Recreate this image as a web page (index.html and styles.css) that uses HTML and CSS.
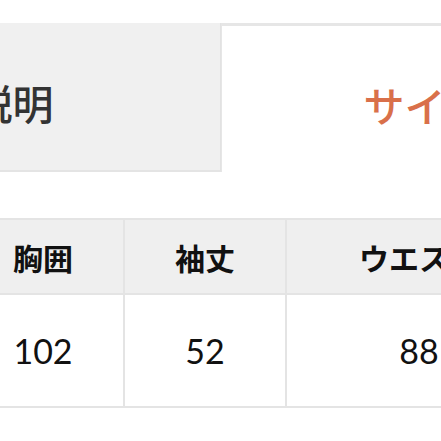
FILE: index.html
```html
<!DOCTYPE html>
<html lang="ja">
<head>
<meta charset="utf-8">
<link rel="stylesheet" href="styles.css">
</head>
<body>
<div class="page">
  <div class="tabs">
    <div class="tab tab-off">商品説明</div>
    <div class="tab tab-on">サイズ詳細</div>
  </div>
  <table class="size-table">
    <colgroup>
      <col class="c1"><col class="c2"><col class="c3">
    </colgroup>
    <thead>
      <tr><th>胸囲</th><th>袖丈</th><th>ウエスト</th></tr>
    </thead>
    <tbody>
      <tr><td>102</td><td>52</td><td>88</td></tr>
    </tbody>
  </table>
</div>
</body>
</html>
```
FILE: styles.css
```css
html, body {
  margin: 0;
  padding: 0;
  background: #fff;
}
.page {
  width: 441px;
  height: 441px;
  overflow: hidden;
  font-family: "Lato", "Noto Sans CJK JP", sans-serif;
}
.tabs {
  display: flex;
  margin-top: 23px;
  margin-left: -277px;
  width: 1000px;
  height: 149px;
}
.tab {
  width: 498px;
  box-sizing: border-box;
  display: flex;
  align-items: center;
  justify-content: center;
  font-family: "Noto Sans CJK JP", sans-serif;
  font-size: 41px;
  font-weight: 500;
  padding-top: 10px;
  white-space: nowrap;
}
.tab-off {
  background: #f0f0f0;
  color: #333;
  border-right: 1px solid #e2e2e2;
  border-bottom: 2px solid #e4e4e4;
}
.tab-on {
  background: #fff;
  color: #d9704a;
  border-top: 3px solid #e6e6e6;
  border-left: 1px solid #e6e6e6;
  padding-right: 10px;
}
.size-table {
  margin-top: 46px;
  margin-left: -39px;
  width: 590px;
  border-collapse: collapse;
  table-layout: fixed;
}
.size-table th,
.size-table td {
  border: 2px solid #e4e4e4;
  text-align: center;
  padding: 0;
}
.size-table th {
  background: #efefef;
  height: 73px;
  font-family: "Noto Sans CJK JP", sans-serif;
  font-weight: 700;
  font-size: 30px;
  color: #111;
}
.size-table td {
  height: 111px;
  font-size: 34px;
  color: #111;
}
.c1, .c2 { width: 162px; }
.c3 { width: 266px; }
```
